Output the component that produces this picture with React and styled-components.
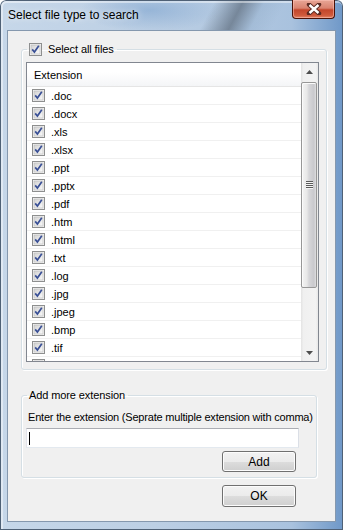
import React from "react";
import styled, { createGlobalStyle } from "styled-components";

const GlobalStyle = createGlobalStyle`
  html, body {
    margin: 0;
    padding: 0;
    background: #ffffff;
  }
  body {
    font-family: "Liberation Sans", Arial, sans-serif;
    font-size: 11px;
    color: #000;
  }
`;

const Window = styled.div`
  width: 343px;
  height: 530px;
  box-sizing: border-box;
  padding: 0 7px 8px 7px;
  display: flex;
  flex-direction: column;
  border-radius: 6px 6px 0 0;
  background:
    linear-gradient(118deg, transparent 60%, rgba(70, 82, 96, 0.55) 68%, rgba(120, 150, 180, 0.2) 74%, transparent 80%) top / 100% 30px no-repeat,
    radial-gradient(ellipse 70px 22px at 150px 10px, rgba(120, 160, 205, 0.55), transparent),
    linear-gradient(to right, #c6d7e9 0%, #bccfe4 45%, #a9c2de 85%, #6f98c8 100%);
  box-shadow: inset 0 0 0 1px #4f6176, inset 1px 1px 0 2px rgba(255, 255, 255, 0.45);
`;

const TitleBar = styled.div`
  height: 30px;
  display: flex;
  align-items: flex-start;
  flex-shrink: 0;
`;

const Title = styled.span`
  font-size: 12px;
  line-height: 30px;
  padding-left: 1px;
  color: #000;
  text-shadow: 0 0 6px rgba(255, 255, 255, 0.9);
`;

const CloseButton = styled.div`
  margin-left: auto;
  margin-right: 1px;
  width: 43px;
  height: 19px;
  box-sizing: border-box;
  border: 1px solid #4a1208;
  border-top: none;
  border-radius: 0 0 4px 4px;
  display: flex;
  align-items: center;
  justify-content: center;
  background: linear-gradient(#e8a696 0%, #d98370 45%, #c3462c 55%, #cf5a3c 85%, #e2876a 100%);
  box-shadow: inset 0 0 0 1px rgba(255, 200, 190, 0.5);
`;

const Client = styled.div`
  flex: 1;
  display: flex;
  flex-direction: column;
  background: #f0f0f0;
  border: 1px solid #8598ae;
`;

const Group = styled.fieldset`
  margin: ${(p) => p.$margin};
  padding: ${(p) => p.$padding};
  border: 1px solid #d5dfe5;
  border-radius: 3px;
  min-width: 0;
  display: flex;
  flex-direction: column;
  box-shadow: inset 1px 1px 0 #ffffff, 1px 1px 0 #ffffff;
`;

const Legend = styled.legend`
  margin-left: 1px;
  padding: 0 3px 0 2px;
  display: flex;
  align-items: center;
  gap: 6px;
  height: 13px;
  line-height: 13px;
  letter-spacing: -0.1px;
`;

const ListView = styled.div`
  height: 300px;
  box-sizing: border-box;
  border: 1px solid #828790;
  background: #ffffff;
  display: flex;
`;

const ListBody = styled.div`
  flex: 1;
  overflow: hidden;
  display: flex;
  flex-direction: column;
`;

const Header = styled.div`
  height: 23px;
  flex-shrink: 0;
  display: flex;
  align-items: center;
  padding-left: 7px;
  border-bottom: 1px solid #e5e5e5;
  background: linear-gradient(#ffffff 0%, #ffffff 40%, #f4f5f7 100%);
`;

const Row = styled.div`
  height: 17px;
  flex-shrink: 0;
  display: flex;
  align-items: center;
  gap: 6px;
  padding-left: 5px;
  border-bottom: 1px solid #f0f0f0;
`;

const ScrollBar = styled.div`
  width: 17px;
  flex-shrink: 0;
  display: flex;
  flex-direction: column;
  background: linear-gradient(to right, #e3e3e3 0%, #f0f0f0 15%, #f3f3f3 85%, #e8e8e8 100%);
`;

const ArrowButton = styled.div`
  height: 17px;
  flex-shrink: 0;
  display: flex;
  align-items: center;
  justify-content: center;
  margin-top: ${(p) => (p.$bottom ? "auto" : "0")};
`;

const Thumb = styled.div`
  margin: 2px 1px 0 0;
  height: 206px;
  box-sizing: border-box;
  border: 1px solid #979797;
  border-radius: 2px;
  display: flex;
  align-items: center;
  justify-content: center;
  background: linear-gradient(to right, #f4f4f4 0%, #e8e8e8 35%, #d6d6d9 50%, #c9c9cd 85%, #dedee0 100%);
  box-shadow: inset 1px 1px 0 #fbfbfb;
`;

const Hint = styled.div`
  margin: 9px 0 0 2px;
  line-height: 13px;
  letter-spacing: -0.2px;
  white-space: nowrap;
`;

const TextBox = styled.div`
  margin-top: 4px;
  width: 273px;
  height: 20px;
  box-sizing: border-box;
  border: 1px solid;
  border-color: #abadb3 #dbdfe6 #e3e9ef #e2e3ea;
  background: #ffffff;
  display: flex;
  align-items: center;
  padding-left: 2px;
`;

const Caret = styled.span`
  width: 1px;
  height: 13px;
  background: #000;
`;

const ButtonRow = styled.div`
  display: flex;
  padding-left: ${(p) => p.$indent}px;
  margin-top: ${(p) => p.$top}px;
`;

const Button = styled.div`
  width: 74px;
  height: ${(p) => p.$height}px;
  box-sizing: border-box;
  border: 1px solid #707070;
  border-radius: 3px;
  display: flex;
  align-items: center;
  justify-content: center;
  font-size: 12px;
  background: linear-gradient(#f2f2f2 0%, #ebebeb 50%, #dddddd 51%, #cfcfcf 100%);
  box-shadow: inset 0 0 0 1px #fcfcfc;
`;

const CheckBox = () => (
  <svg width="13" height="13" viewBox="0 0 13 13" style={{ flexShrink: 0 }}>
    <defs>
      <linearGradient id="cbfill" x1="0" y1="0" x2="1" y2="1">
        <stop offset="0" stopColor="#d2d2d2" />
        <stop offset="1" stopColor="#fbfbfb" />
      </linearGradient>
    </defs>
    <rect x="0.5" y="0.5" width="12" height="12" fill="#f4f4f4" stroke="#8e8f8f" />
    <rect x="2" y="2" width="9" height="9" fill="url(#cbfill)" stroke="#b9b9b9" strokeWidth="0.6" />
    <path d="M3.2 6.4 L5.4 9 L9.8 2.8" fill="none" stroke="#3a5096" strokeWidth="1.7" />
  </svg>
);

const extensions = [
  ".doc", ".docx", ".xls", ".xlsx", ".ppt", ".pptx", ".pdf", ".htm",
  ".html", ".txt", ".log", ".jpg", ".jpeg", ".bmp", ".tif", ".tiff",
];

export default function App() {
  return (
    <>
      <GlobalStyle />
      <Window>
        <TitleBar>
          <Title>Select file type to search</Title>
          <CloseButton>
            <svg width="16" height="12" viewBox="0 0 16 12">
              <path d="M3 1.5 L13 10.5 M13 1.5 L3 10.5" stroke="#5b2a22" strokeWidth="4.4" strokeLinecap="round" />
              <path d="M3.5 2 L12.5 10 M12.5 2 L3.5 10" stroke="#ffffff" strokeWidth="2.4" />
            </svg>
          </CloseButton>
        </TitleBar>
        <Client>
          <Group $margin="12px 8px 0 13px" $padding="6px 7px 7px 4px">
            <Legend>
              <CheckBox />
              <span>Select all files</span>
            </Legend>
            <ListView>
              <ListBody>
                <Header>Extension</Header>
                {extensions.map((ext) => (
                  <Row key={ext}>
                    <CheckBox />
                    <span>{ext}</span>
                  </Row>
                ))}
              </ListBody>
              <ScrollBar>
                <ArrowButton>
                  <svg width="7" height="4" viewBox="0 0 7 4">
                    <path d="M0 4 L3.5 0 L7 4 Z" fill="#4d4d4d" />
                  </svg>
                </ArrowButton>
                <Thumb>
                  <svg width="7" height="8" viewBox="0 0 7 8">
                    <path d="M0 0.5 H7 M0 2.5 H7 M0 4.5 H7 M0 6.5 H7" stroke="#5a5a5a" strokeWidth="1" />
                    <path d="M0 1.5 H7 M0 3.5 H7 M0 5.5 H7 M0 7.5 H7" stroke="#f4f4f4" strokeWidth="1" />
                  </svg>
                </Thumb>
                <ArrowButton $bottom>
                  <svg width="7" height="4" viewBox="0 0 7 4">
                    <path d="M0 0 L7 0 L3.5 4 Z" fill="#4d4d4d" />
                  </svg>
                </ArrowButton>
              </ScrollBar>
            </ListView>
          </Group>

          <Group $margin="19px 18px 0 13px" $padding="0 5px 5px 4px">
            <Legend>Add more extension</Legend>
            <Hint>Enter the extension (Seprate multiple extension with comma)</Hint>
            <TextBox>
              <Caret />
            </TextBox>
            <ButtonRow $indent={196} $top={3}>
              <Button $height={21}>Add</Button>
            </ButtonRow>
          </Group>

          <ButtonRow $indent={214} $top={7}>
            <Button $height={22}>OK</Button>
          </ButtonRow>
        </Client>
      </Window>
    </>
  );
}
